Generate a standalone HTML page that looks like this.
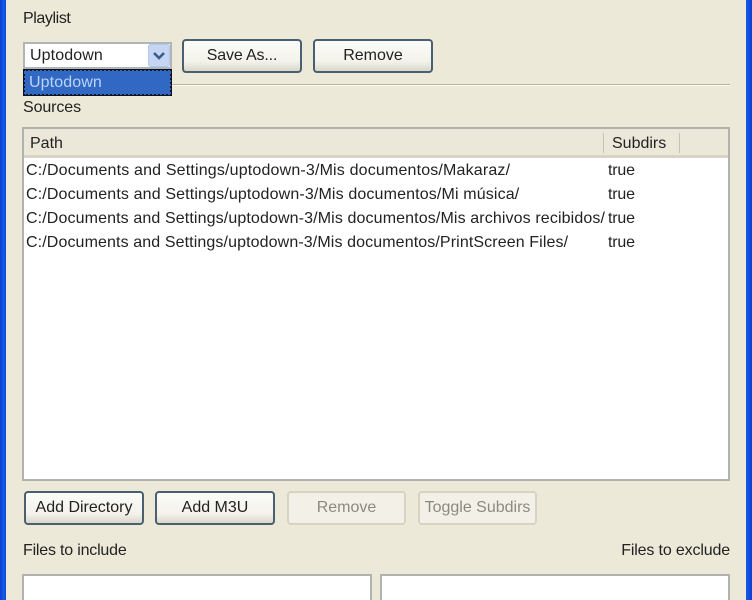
<!DOCTYPE html>
<html><head><meta charset="utf-8"><style>
html,body{margin:0;padding:0;overflow:hidden;width:752px;height:600px}
body{background:#ece9d8;font-family:"Liberation Sans",sans-serif;font-size:16px;color:#222}
#w{position:absolute;left:0;top:0;width:752px;height:600px;overflow:hidden;background:#ece9d8;filter:blur(.35px)}
.a{position:absolute;box-sizing:border-box}
.t{position:absolute;white-space:nowrap;line-height:20px;height:20px}
.b{position:absolute;box-sizing:border-box;height:34px;border:2px solid #4a6070;border-radius:4px;background:linear-gradient(#fbfbf9,#f3f2ea 70%,#d9d6ca);text-align:center;line-height:29px;color:#222}
.d{border:2px solid #d6d3c3;background:#f3f1e7;color:#8a8a80}
</style></head><body><div id="w">
<div class="a" style="left:0;top:0;width:6px;height:600px;background:linear-gradient(90deg,#0a3fd0,#1a5ae8 70%,#0c40c8)"></div>
<div class="a" style="left:746px;top:0;width:6px;height:600px;background:linear-gradient(90deg,#1a5ae8,#0a3fd0)"></div>

<div class="t" style="left:23px;top:9px;letter-spacing:-.4px">Playlist</div>

<div class="a" style="left:23px;top:42px;width:149px;height:27px;background:#fff;border:2px solid #b0b5b8"></div>
<div class="t" style="left:30px;top:46px;letter-spacing:.1px">Uptodown</div>
<svg class="a" style="left:148px;top:44px" width="22" height="23" viewBox="0 0 22 23"><rect x="0.5" y="0.5" width="21" height="22" rx="2" fill="#c5d5f4" stroke="#b5c7ea"/><path d="M6 9l5 5 5-5" fill="none" stroke="#3f5a8c" stroke-width="2.6"/></svg>

<div class="a" style="left:23px;top:69px;width:149px;height:27px;background:#3168c4;border:2px dotted #10131c;outline:1px solid #10131c;outline-offset:-1px"></div>
<div class="t" style="left:29px;top:73px;color:#bcd4f6;letter-spacing:.1px">Uptodown</div>

<div class="b" style="left:182px;top:39px;width:120px;letter-spacing:-.15px">Save As...</div>
<div class="b" style="left:313px;top:39px;width:120px">Remove</div>

<div class="a" style="left:172px;top:84px;width:558px;height:1px;background:#b5b2a2"></div>
<div class="a" style="left:172px;top:85px;width:558px;height:1px;background:#fbfaf4"></div>

<div class="t" style="left:23px;top:98px;letter-spacing:-.1px">Sources</div>

<div class="a" style="left:22px;top:127px;width:708px;height:354px;background:#fff;border:2px solid #b0b3ae"></div>
<div class="a" style="left:24px;top:129px;width:704px;height:29px;background:#ebe8d9;border-bottom:3px solid #d6d3c4"></div>
<div class="a" style="left:603px;top:133px;width:1px;height:20px;background:#c5c2b2"></div>
<div class="a" style="left:679px;top:133px;width:1px;height:20px;background:#c5c2b2"></div>
<div class="t" style="left:30px;top:134px">Path</div>
<div class="t" style="left:612px;top:134px">Subdirs</div>

<div class="t" style="left:26px;top:161px;letter-spacing:.17px">C:/Documents and Settings/uptodown-3/Mis documentos/Makaraz/</div>
<div class="t" style="left:608px;top:161px;letter-spacing:-.2px">true</div>
<div class="t" style="left:26px;top:185px;letter-spacing:.14px">C:/Documents and Settings/uptodown-3/Mis documentos/Mi música/</div>
<div class="t" style="left:608px;top:185px;letter-spacing:-.2px">true</div>
<div class="t" style="left:26px;top:209px;letter-spacing:.12px">C:/Documents and Settings/uptodown-3/Mis documentos/Mis archivos recibidos/</div>
<div class="t" style="left:608px;top:209px;letter-spacing:-.2px">true</div>
<div class="t" style="left:26px;top:233px;letter-spacing:.11px">C:/Documents and Settings/uptodown-3/Mis documentos/PrintScreen Files/</div>
<div class="t" style="left:608px;top:233px;letter-spacing:-.2px">true</div>

<div class="b" style="left:24px;top:491px;width:120px">Add Directory</div>
<div class="b" style="left:155px;top:491px;width:120px">Add M3U</div>
<div class="b d" style="left:287px;top:491px;width:119px">Remove</div>
<div class="b d" style="left:418px;top:491px;width:119px;white-space:nowrap">Toggle Subdirs</div>

<div class="t" style="left:23px;top:541px;letter-spacing:-.2px">Files to include</div>
<div class="t" style="right:22px;top:541px;letter-spacing:-.15px">Files to exclude</div>

<div class="a" style="left:22px;top:574px;width:350px;height:30px;background:#fff;border:2px solid #b0b3ae"></div>
<div class="a" style="left:380px;top:574px;width:350px;height:30px;background:#fff;border:2px solid #b0b3ae"></div>
</div></body></html>
